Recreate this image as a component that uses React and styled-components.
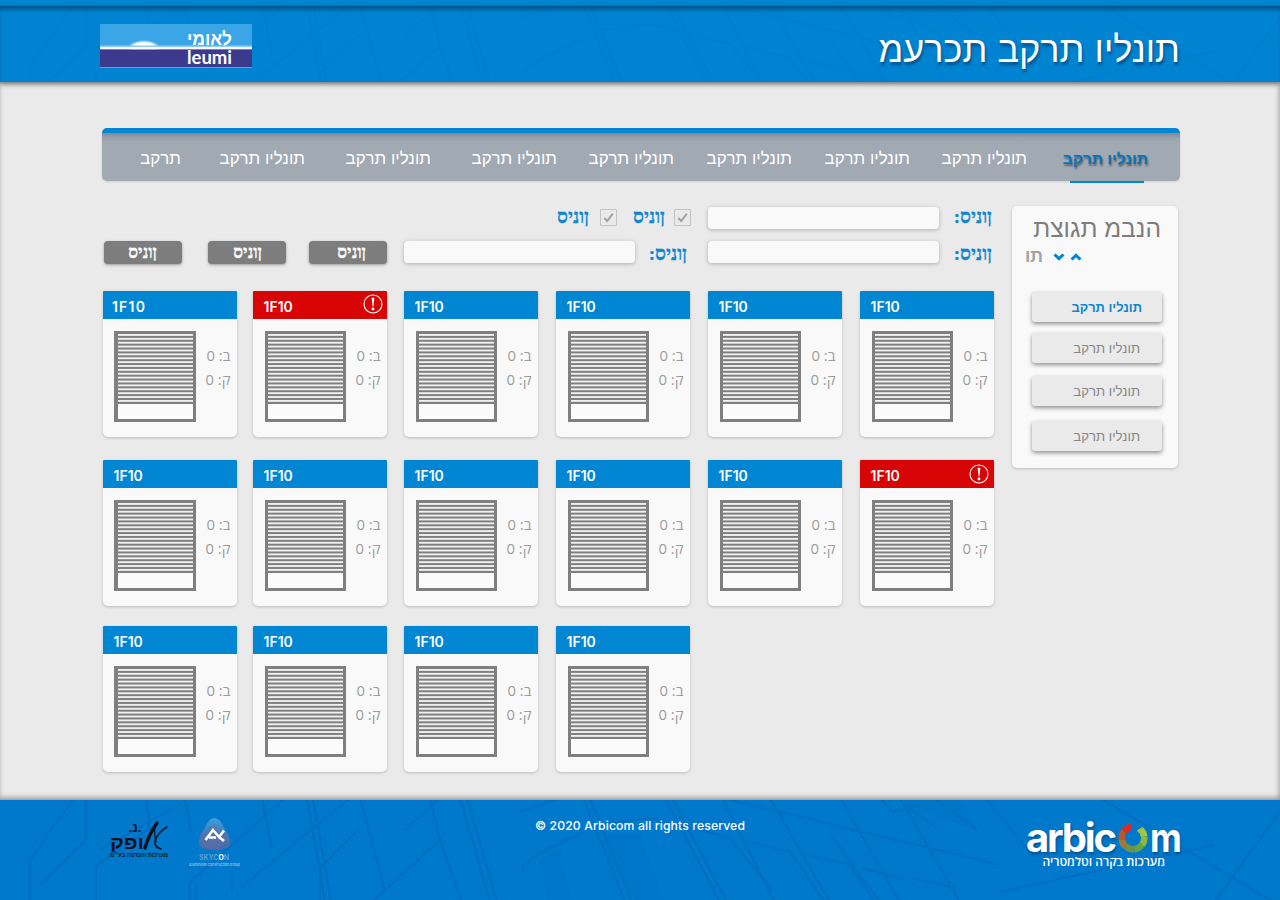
import React from 'react';
import styled, { createGlobalStyle, css } from 'styled-components';

const plain = '"Liberation Sans", sans-serif';
const compact = '"Open Sans", sans-serif';
const tapered = '"Liberation Serif", serif';

const Global = createGlobalStyle`
  *, *::before, *::after { box-sizing: border-box; }
  body { margin: 0; background: #eaeaea; font-family: ${plain}; }
`;

const Page = styled.div`
  width: 1280px;
  height: 900px;
  display: flex;
  flex-direction: column;
  overflow: hidden;
`;

const TopStrip = styled.div`
  height: 6px;
  flex: none;
  background: #0086d2;
`;

const Header = styled.header`
  position: relative;
  z-index: 1;
  height: 76px;
  flex: none;
  display: flex;
  justify-content: space-between;
  align-items: flex-start;
  padding: 18px 100px 0;
  background: #0084d2;
  box-shadow: inset 0 5px 5px -2px rgba(0, 40, 80, 0.6), 0 2px 5px rgba(0, 0, 0, 0.5);
`;

const Backdrop = styled.svg`
  position: absolute;
  inset: 0;
  width: 100%;
  height: 100%;
  opacity: ${(p) => p.$strength};
  pointer-events: none;
`;

const Title = styled.h1`
  position: relative;
  margin: 4px 0 0;
  font-size: 36.1px;
  line-height: 44px;
  font-weight: 400;
  color: #fff;
  white-space: nowrap;
  text-shadow: 1px 3px 3px rgba(0, 30, 60, 0.5);
`;

const Leumi = styled.div`
  position: relative;
  width: 152px;
  height: 44px;
`;

const Main = styled.main`
  flex: 1;
  padding: 46px 100px 0 102px;
  background: #eaeaea;
  box-shadow: inset -2px 0 5px rgba(0, 0, 0, 0.16), inset 0 -4px 5px -1px rgba(0, 0, 0, 0.26);
`;

const Nav = styled.nav`
  position: relative;
  direction: rtl;
  width: 1078px;
  height: 53px;
  display: flex;
  padding: 0 32px;
  border-top: 5px solid #0086d2;
  border-radius: 5px;
  background: linear-gradient(#808791 0, #9ba4ae 5px, #a1a9b3 10px);
  box-shadow: 0 1px 2px rgba(0, 0, 0, 0.12);
`;

const NavItem = styled.a`
  position: relative;
  flex: none;
  width: ${(p) => p.$width || 85}px;
  margin-left: ${(p) => p.$gap}px;
  font-size: 16.9px;
  line-height: 51px;
  white-space: nowrap;
  color: #fff;
  ${(p) =>
    p.$active &&
    css`
      font-size: 15.6px;
      line-height: 51px;
      font-weight: 700;
      color: #0b73bb;
      text-shadow: 1px 2px 2px rgba(0, 0, 0, 0.45);
      &::after {
        content: '';
        position: absolute;
        left: 7px;
        width: 74px;
        top: 48px;
        height: 2px;
        background: #0086d2;
      }
    `}
`;

const Content = styled.div`
  display: flex;
  align-items: flex-start;
  justify-content: space-between;
  width: 1076px;
  padding-top: 25px;
`;

const Board = styled.section`
  width: 892px;
`;

const FilterRow = styled.div`
  direction: rtl;
  display: flex;
  height: ${(p) => p.$height}px;
  padding-right: 2px;
`;

const FilterLabel = styled.label`
  flex: none;
  width: ${(p) => p.$width}px;
  margin-left: ${(p) => p.$gap}px;
  font-family: ${tapered};
  font-size: 19.2px;
  line-height: 22px;
  font-weight: 700;
  color: #0e86d0;
  -webkit-text-stroke: 0.3px #0e86d0;
  white-space: nowrap;
  padding-top: ${(p) => p.$drop || 0}px;
`;

const Field = styled.div`
  flex: none;
  width: 231px;
  height: 22px;
  margin: 1px 0 0 ${(p) => p.$gap}px;
  border-radius: 4px;
  background: #f9f9f9;
  box-shadow: 0 1px 4px rgba(0, 0, 0, 0.25);
`;

const Check = styled.span`
  flex: none;
  width: 17px;
  height: 17px;
  margin: 3px 0 0 ${(p) => p.$gap}px;
  border: 1px solid #c3c3c3;
  border-radius: 1px;
  display: flex;
  align-items: center;
  justify-content: center;
`;

const FilterButton = styled.button`
  flex: none;
  width: 78px;
  height: 23px;
  margin: 1px 0 0 ${(p) => p.$gap}px;
  padding: 0 ${(p) => p.$inset}px 0 0;
  border: 0;
  border-radius: 4px;
  background: #7d7d7d;
  color: #fff;
  font: 700 17.2px/20px ${tapered};
  -webkit-text-stroke: 0.3px #fff;
  text-align: right;
  white-space: nowrap;
  box-shadow: 0 1px 3px rgba(0, 0, 0, 0.35);
`;

const Cards = styled.div`
  display: grid;
  grid-template-columns: 150px 151px 152px 152px 152px 134px;
  grid-template-rows: 169px 166px 146px;
  padding: 17px 0 0 1px;
`;

const Card = styled.article`
  width: 134px;
  height: 146px;
  border-radius: 1px 1px 5px 5px;
  background: #f9f9f9;
  box-shadow: 0 1px 3px rgba(0, 0, 0, 0.2);
  overflow: hidden;
`;

const CardHead = styled.div`
  height: 28px;
  display: flex;
  justify-content: space-between;
  padding: 2px ${(p) => p.$right}px 0 ${(p) => p.$pad}px;
  background: ${(p) => (p.$alert ? '#d70506' : '#0086d2')};
  color: #fff;
  font: 600 14px/28px Inter, sans-serif;
  letter-spacing: ${(p) => (p.$wide ? '1.2px' : '0')};
`;

const CardBody = styled.div`
  display: flex;
  justify-content: space-between;
  padding: 12px ${(p) => p.$right}px 0 ${(p) => p.$left}px;
`;

const Stats = styled.div`
  direction: rtl;
  padding-top: 12px;
  font-family: ${compact};
  font-size: 14.8px;
  line-height: 24px;
  color: #9c9c9c;
  white-space: nowrap;
`;

const Panel = styled.aside`
  direction: rtl;
  width: 166px;
  height: 262px;
  border-radius: 5px;
  background: #f9f9f9;
  box-shadow: 0 1px 3px rgba(0, 0, 0, 0.2);
`;

const PanelTitle = styled.h2`
  margin: 0;
  padding: 7px 17px 0 0;
  font-size: 24.6px;
  line-height: 32px;
  font-weight: 400;
  color: #7d7d7d;
  white-space: nowrap;
`;

const SortRow = styled.div`
  direction: ltr;
  display: flex;
  align-items: center;
  height: 23px;
  padding-left: 13px;
  font-size: 17.8px;
  font-weight: 600;
  color: #a2a2a2;
`;

const SortLabel = styled.span`
  width: 28px;
`;

const SortArrows = styled.span`
  display: flex;
  gap: 5px;
`;

const PanelButton = styled.button`
  display: block;
  width: 130px;
  height: 30px;
  margin: ${(p) => p.$top}px 16px 0 0;
  padding: 2px ${(p) => (p.$active ? 20 : 22)}px 0 0;
  border: 0;
  border-radius: 3px;
  background: #eaeaea;
  box-shadow: 0 2px 4px rgba(0, 0, 0, 0.42);
  font: ${(p) => (p.$active ? '700 12.9px/28px' : '400 13.2px/28px')} ${plain};
  color: ${(p) => (p.$active ? '#0e86d0' : '#858585')};
  text-align: right;
  white-space: nowrap;
`;

const Footer = styled.footer`
  position: relative;
  height: 100px;
  flex: none;
  display: grid;
  grid-template-columns: 340px 1fr 340px;
  padding: 0 100px;
  background: #0078cb;
`;

const Partners = styled.div`
  position: relative;
  display: flex;
  gap: 17px;
  padding: 16px 0 0 8px;
`;

const Copyright = styled.p`
  position: relative;
  margin: 16px 0 0;
  text-align: center;
  font: 500 12.2px/20px Inter, sans-serif;
  letter-spacing: 0.13px;
  color: #fff;
  white-space: nowrap;
`;

const Brand = styled.div`
  position: relative;
  justify-self: end;
  width: 154px;
  padding-top: 15px;
  color: #fff;
`;

const BrandName = styled.div`
  display: flex;
  height: 40px;
  font: 700 40px/46px Inter, sans-serif;
  letter-spacing: -2.2px;
  text-shadow: 1px 2px 3px rgba(0, 30, 60, 0.4);
`;

const BrandTag = styled.div`
  direction: rtl;
  padding-right: 15px;
  font-family: ${compact};
  font-size: 12px;
  line-height: 14px;
  font-weight: 600;
  white-space: nowrap;
`;

function Facade({ strength }) {
  return (
    <Backdrop $strength={strength} viewBox="0 0 1280 100" preserveAspectRatio="xMidYMin slice">
      <g fill="none" stroke="#005eb0" strokeWidth="2">
        <path d="M74 -2 L30 60 V102 M86 -2 V40 L40 85 M100 50 L180 4 M146 -2 L150 28 L96 66 V102 M185 -2 L191 32 M190 102 V82 L285 -2 M196 102 V84 M262 -2 L272 48 M232 70 V92 M307 -2 L325 102 M313 -2 L331 102 M360 -2 L385 90 M240 88 L350 -2 M360 28 L320 68 V100 M405 30 L440 -2 M372 102 L440 40 L430 -2 M440 40 L462 102" />
        <path d="M460 -2 L490 102 M467 -2 L497 102 M522 70 Q524 58 583 33 M520 12 L560 -2 M583 -2 L625 102 M590 -2 L632 102 M665 -2 L720 102 M672 -2 L727 102 M722 -2 L775 102 M770 -2 L830 102 M830 34 L880 102 M840 -2 L900 102 M900 -2 L960 102" />
        <path d="M722 -2 L1000 65 M602 24 L650 18 L730 38 L772 90 M748 41 L790 52 L825 102 M808 55 L850 65 L875 102 M862 68 L905 80 M912 78 L955 88 M880 -2 L893 12 L925 4 M905 5 L936 27 M935 -2 L978 31 M1000 92 L1215 45 M1100 -2 L1290 112 M1290 -2 L1210 108 M985 -2 L1035 58" />
      </g>
      <path d="M596 34 H640 L664 102 H636Z M538 60 L560 48 L572 102 H548Z M900 0 H960 L978 30 L925 12Z" fill="#005eb0" opacity=".25" />
    </Backdrop>
  );
}

function LeumiLogo() {
  return (
    <Leumi>
      <svg width="152" height="44" viewBox="0 0 152 44">
        <defs>
          <radialGradient id="sun">
            <stop offset="0.7" stopColor="#fff" />
            <stop offset="1" stopColor="#fff" stopOpacity="0" />
          </radialGradient>
        </defs>
        <rect width="152" height="44" fill="#3aa6e8" />
        <ellipse cx="44" cy="25" rx="17" ry="9" fill="url(#sun)" />
        <rect y="21.500" width="152" height="2" fill="#8dcbf2" />
        <rect y="23" width="152" height="2.500" fill="#fff" />
        <rect y="25.500" width="152" height="17.500" fill="#3b3a8e" />
        <rect y="43" width="152" height="1" fill="#8d90bd" />
        <text x="87" y="20.500" textLength="45" lengthAdjust="spacingAndGlyphs" fontFamily="Liberation Sans" fontWeight="700" fontSize="18.500" fill="#fff">לאומי</text>
        <text x="87" y="39.500" textLength="45" lengthAdjust="spacingAndGlyphs" fontFamily="Lato" fontWeight="700" fontSize="18.500" fill="#fff">leumi</text>
      </svg>
    </Leumi>
  );
}

const SLATS = 18;
const PITCH = 3.88;

function Shutter({ width }) {
  const left = width === 82 ? 4 : 3;
  const inner = width - left - 3;
  return (
    <svg width={width} height="91" viewBox={`0 0 ${width} 91`}>
      <rect width={width} height="91" fill="#7f7f7f" />
      {Array.from({ length: SLATS }, (_, i) => (
        <rect key={i} x={left} y={3 + i * PITCH} width={inner} height="1.900" fill="#f0f0f0" />
      ))}
      <rect x={left} y="73" width={inner} height="15" fill="#fbfbfb" />
    </svg>
  );
}

const AlertMark = styled.svg`
  display: block;
  margin-top: ${(p) => p.$drop}px;
`;

function Alert({ drop }) {
  return (
    <AlertMark $drop={drop} width="20" height="20" viewBox="0 0 20 20">
      <circle cx="10" cy="10" r="9" fill="none" stroke="#fff" strokeWidth="1.100" />
      <path d="M8.700 4.400 Q10 2.600 11.300 4.400 L10.400 12.600 H9.600Z" fill="#fff" />
      <circle cx="10" cy="15" r="1.400" fill="#fff" />
    </AlertMark>
  );
}

function Tick() {
  return (
    <svg width="11" height="11" viewBox="0 0 11 11">
      <path d="M1.300 6 L4.200 9 L9.800 1.600" fill="none" stroke="#a0a0a0" strokeWidth="2" />
    </svg>
  );
}

function Chevron({ up }) {
  return (
    <svg width="12" height="8" viewBox="0 0 12 8">
      <path d={up ? 'M1.500 6.500 L6 2.400 L10.500 6.500' : 'M1.500 1.500 L6 5.600 L10.500 1.500'} fill="none" stroke="#0086d2" strokeWidth="3" />
    </svg>
  );
}

function OfekLogo() {
  return (
    <svg width="62" height="44" viewBox="0 0 62 44" fill="#06131f">
      <text x="27" y="15.500" direction="rtl" textAnchor="middle" fontFamily="Liberation Sans" fontWeight="700" fontSize="13">.נ.</text>
      <text x="2" y="32.500" textLength="34" lengthAdjust="spacingAndGlyphs" fontFamily="Liberation Sans" fontWeight="700" fontSize="18">ופק</text>
      <g fill="none" stroke="#06131f" strokeLinecap="round">
        <path d="M49 7 Q41 18 37 32" strokeWidth="3.400" />
        <path d="M59 11 Q50 16 47 25 Q46 31 53 33" strokeWidth="1.500" />
        <path d="M47 10 Q46 20 48 26" strokeWidth="1.200" />
      </g>
      <text x="2" y="41" textLength="58" lengthAdjust="spacingAndGlyphs" fontFamily="Liberation Sans" fontWeight="700" fontSize="6.500">מערכות והנדסה בע״מ</text>
    </svg>
  );
}

function SkyconLogo() {
  return (
    <svg width="56" height="56" viewBox="0 0 56 56">
      <defs>
        <linearGradient id="sky" x1="0" y1="0" x2="0" y2="1">
          <stop offset="0" stopColor="#35a3e0" />
          <stop offset="0.5" stopColor="#4579b3" />
          <stop offset="1" stopColor="#496aa6" />
        </linearGradient>
      </defs>
      <path d="M27.500 2 Q31 2 34 6 L42 20 Q46 31 38 32.500 Q28 35.500 17 32.500 Q9 31 13 20 L21 6 Q24 2 27.500 2Z" fill="url(#sky)" />
      <path d="M13 20 L27 8 L42 20 L31 34 L17 32Z" fill="#6a6fa6" opacity=".4" />
      <path d="M18.500 24 L26 14 L32 21 L37 14.500 M32 21 L37 25 M22 21.500 H29" fill="none" stroke="#fff" strokeWidth="2.600" />
      <text x="12" y="43.500" textLength="30" lengthAdjust="spacingAndGlyphs" fontFamily="Inter" fontWeight="700" fontSize="7" fill="#5f9fce">SKYC<tspan fill="#fff">O</tspan>N</text>
      <text x="2" y="50" textLength="51" lengthAdjust="spacingAndGlyphs" fontFamily="Inter" fontWeight="600" fontSize="3.800" fill="#8fc2e6">Aluminium Construction Group</text>
    </svg>
  );
}

const RingMark = styled.svg`
  flex: none;
  margin: 7px 2px 0 3px;
`;

function Ring() {
  const colors = ['#a3c93a', '#8bbb3c', '#6aa343', '#6b9444', '#9a7c3a', '#b4582e', '#dc2a28'];
  return (
    <RingMark width="30" height="32" viewBox="-15 -16 30 32">
      {colors.map((c, i) => (
        <circle key={c} r="11.300" fill="none" stroke={c} strokeWidth="6.600" pathLength="360" strokeDasharray="47 313" transform={`rotate(${-54 + i * 45})`} />
      ))}
    </RingMark>
  );
}

const BrandLead = styled.span`
  width: 89px;
`;

const BrandTail = styled.span`
  transform: scaleX(0.87);
  transform-origin: left;
`;

const NAV = [36, 32, 33, 33, 32, 41, 41, 39, 0];
const CARDS = Array.from({ length: 16 }, (_, i) => ({ id: i, col: i % 6, alert: i === 1 || i === 11 }));

export default function App() {
  return (
    <Page>
      <Global />
      <TopStrip />
      <Header>
        <Facade strength={0.09} />
        <LeumiLogo />
        <Title dir="rtl">תונליו תרקב תכרעמ</Title>
      </Header>
      <Main>
        <Nav>
          {NAV.map((gap, i) => (
            <NavItem key={i} $gap={gap} $active={i === 0}>
              {i === 8 ? 'תרקב' : 'תונליו תרקב'}
            </NavItem>
          ))}
        </Nav>
        <Content>
          <Board>
            <FilterRow $height={34}>
              <FilterLabel $width={38} $gap={15}>ןוניס:</FilterLabel>
              <Field $gap={17} />
              <Check $gap={9}><Tick /></Check>
              <FilterLabel $width={33} $gap={15}>ןוניס</FilterLabel>
              <Check $gap={11}><Tick /></Check>
              <FilterLabel $width={33} $gap={0}>ןוניס</FilterLabel>
            </FilterRow>
            <FilterRow $height={34}>
              <FilterLabel $width={38} $gap={15} $drop={3}>ןוניס:</FilterLabel>
              <Field $gap={21} />
              <FilterLabel $width={37} $gap={15} $drop={3}>ןוניס:</FilterLabel>
              <Field $gap={17} />
              <FilterButton $gap={23} $inset={21}>ןוניס</FilterButton>
              <FilterButton $gap={26} $inset={24}>ןוניס</FilterButton>
              <FilterButton $gap={0} $inset={25}>ןוניס</FilterButton>
            </FilterRow>
            <Cards>
              {CARDS.map(({ id, col, alert }) => (
                <Card key={id}>
                  <CardHead $alert={alert} $wide={id === 0} $pad={id === 0 ? 9 : 10.5} $right={col === 1 ? 4 : 5.5}>
                    <span>1F10</span>
                    {alert && <Alert drop={col === 1 ? 0.5 : 2} />}
                  </CardHead>
                  <CardBody $left={col ? 12 : 11} $right={6.5}>
                    <Shutter width={col ? 81 : 82} />
                    <Stats>
                      <div>ב: 0</div>
                      <div>ק: 0</div>
                    </Stats>
                  </CardBody>
                </Card>
              ))}
            </Cards>
          </Board>
          <Panel>
            <PanelTitle>הנבמ תגוצת</PanelTitle>
            <SortRow>
              <SortLabel>תו</SortLabel>
              <SortArrows>
                <Chevron />
                <Chevron up />
              </SortArrows>
            </SortRow>
            <PanelButton $top={24} $active>תונליו תרקב</PanelButton>
            <PanelButton $top={11}>תונליו תרקב</PanelButton>
            <PanelButton $top={13}>תונליו תרקב</PanelButton>
            <PanelButton $top={15}>תונליו תרקב</PanelButton>
          </Panel>
        </Content>
      </Main>
      <Footer>
        <Facade strength={0.32} />
        <Partners>
          <OfekLogo />
          <SkyconLogo />
        </Partners>
        <Copyright>© 2020 Arbicom all rights reserved</Copyright>
        <Brand>
          <BrandName>
            <BrandLead>arbic</BrandLead>
            <Ring />
            <BrandTail>m</BrandTail>
          </BrandName>
          <BrandTag>מערכות בקרה וטלמטריה</BrandTag>
        </Brand>
      </Footer>
    </Page>
  );
}
